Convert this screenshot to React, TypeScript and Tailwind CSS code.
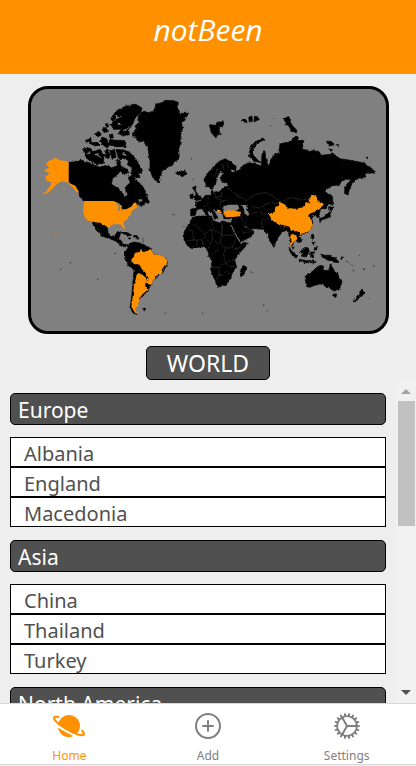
import { IoAddCircleOutline, IoCogOutline, IoPlanet } from "react-icons/io5";

const regions = [
  { name: "Europe", countries: ["Albania", "England", "Macedonia"] },
  { name: "Asia", countries: ["China", "Thailand", "Turkey"] },
  { name: "North America", countries: [] },
];

function WorldMap() {
  return (
    <svg
      viewBox="33 27 1065 726"
      className="block w-full"
      role="img"
      aria-label="World map"
    >
      <defs>
        <filter id="coast" x="0" y="0" width="100%" height="100%">
          <feTurbulence type="fractalNoise" baseFrequency="0.08" numOctaves="2" seed="4" />
          <feDisplacementMap in="SourceGraphic" scale="9" xChannelSelector="R" yChannelSelector="G" />
        </filter>
      </defs>

      <g fill="#000" stroke="#000" strokeWidth="2" strokeLinejoin="round" filter="url(#coast)">
        {/* Greenland and Iceland */}
        <path d="M338 158L350 148L345 138L358 126L354 110L372 92L388 98L405 88L408 72L428 68L436 60L462 62L475 70L472 84L482 100L504 100L494 122L484 126L488 146L482 166L484 188L476 206L478 236L462 246L458 256L440 262L426 274L418 308L410 306L398 292L390 270L390 244L384 206L374 186L352 182L348 172L338 170Z" />
        <path d="M470 274L480 278L494 270L500 280L488 290L476 286Z" />
        {/* Canadian Arctic */}
        <path d="M272 118L284 96L310 80L346 72L366 84L362 100L346 112L338 132L326 148L328 164L308 168L296 160L306 148L282 148L272 134L280 124Z" />
        <path d="M268 178L282 180L318 182L316 200L284 200L268 194Z" />
        <path d="M196 184L212 170L214 188L232 186L240 196L226 198L208 190Z" />
        <path d="M190 206L208 204L224 214L240 208L252 224L250 250L230 252L212 244L196 232Z" />
        <path d="M224 162L236 154L244 162L234 170Z M242 184L248 172L260 176L262 186L270 192L262 204L248 194Z M246 148L256 142L266 154L254 160Z M256 132L262 130L266 140L260 142Z M268 164L278 162L280 174L270 174Z" />
        <path d="M254 214L262 208L272 222L266 236L256 232Z M272 212L284 208L288 232L276 238Z" />
        <path d="M288 208L310 210L328 216L340 230L352 242L360 262L366 276L358 282L360 296L344 290L332 276L338 264L322 254L326 242L308 234L296 238Z" />
        <path d="M300 272L312 262L326 276L314 284Z" />
        {/* Canada */}
        <path d="M146 247L160 246L184 240L206 248L224 256L240 262L258 256L276 264L292 256L288 240L300 242L308 262L296 280L278 296L274 312L292 324L304 334L312 352L320 344L316 322L330 308L324 288L338 284L352 304L366 316L376 334L384 346L366 356L350 358L356 368L372 362L374 374L358 376L345 370L332 382L316 390L300 388L292 368L280 363L190 363L180 346L166 318L146 308Z" />
        <path d="M366 358L374 346L388 364L386 370L370 366Z" />
        {/* Mexico, Central America and Caribbean */}
        <path d="M214 424L232 428L246 428L262 442L264 458L272 468L284 468L290 458L302 458L298 472L292 478L302 480L308 492L322 494L328 500L312 500L298 492L286 482L268 476L246 468L238 456L228 438L236 458L228 450Z" />
        <path d="M300 456L314 456L334 464L332 468L312 462Z M338 468L350 466L358 474L342 474Z M324 474L332 474L330 478Z" />
        {/* South America */}
        <path d="M324 492L342 486L364 490L394 506L394 516L440 538L442 548L430 576L402 596L390 620L378 638L360 654L350 678L344 690L354 704L340 700L330 684L334 656L338 618L342 570L326 558L312 532L316 514L324 508Z" />
        <path d="M368 686L376 684L376 690Z" />
        {/* Europe, Russia and Asia */}
        <path d="M552 298L566 276L582 258L598 244L616 236L632 246L648 260L648 270L630 268L636 278L660 270L664 258L688 248L706 252L724 258L726 222L734 212L738 236L746 262L756 228L776 218L780 192L806 186L828 168L838 180L852 182L846 208L874 212L896 214L904 226L938 222L960 236L986 240L1018 246L1034 250L1054 264L1066 276L1050 280L1034 280L1038 290L1018 294L1000 304L990 320L984 346L974 342L974 320L994 298L976 298L956 314L932 318L914 334L922 340L930 346L928 368L916 386L904 386L896 396L900 408L894 416L886 404L874 406L878 428L872 446L858 460L836 464L844 478L840 488L830 484L826 476L820 486L818 496L824 506L820 508L812 490L810 470L800 450L784 458L768 482L764 498L756 496L742 464L728 448L704 446L686 446L668 432L680 446L696 448L702 456L696 468L662 486L652 472L636 446L632 430L638 416L612 416L608 400L592 386L586 400L594 414L584 418L576 396L562 392L566 410L560 408L546 386L532 388L526 406L512 408L512 388L530 384L526 368L544 362L556 346L572 346L574 332L584 336L600 334L610 322L622 318L624 310L604 306L602 294L610 276L600 272L592 290L586 314L576 330L566 320L556 320Z" />
        {/* Africa and Madagascar */}
        <path d="M518 412L540 408L574 408L580 422L602 430L610 424L634 430L640 448L652 478L662 490L682 486L676 500L656 522L644 540L650 562L636 582L630 600L616 616L592 622L584 598L572 568L576 544L564 522L562 506L544 500L516 506L502 496L492 480L492 458L506 432Z" />
        <path d="M674 556L678 560L672 584L662 590L660 578L664 566Z" />
        {/* British Isles */}
        <path d="M518 322L528 318L526 332L538 348L546 358L528 362L522 350L528 340Z M510 344L520 342L518 354L510 352Z" />
        {/* Svalbard, Franz Josef Land, Novaya Zemlya and Siberian islands */}
        <path d="M568 134L586 136L592 126L612 126L608 138L594 142L604 164L594 160L588 174L574 158Z" />
        <path d="M664 122L676 118L682 124L670 128Z M686 112L696 108L698 124L688 126Z M704 108L712 112L718 118L702 126Z" />
        <path d="M726 174L732 180L714 188L700 204L700 226L716 242L724 248L704 244L688 230L688 216L696 196L708 182Z" />
        <path d="M792 114L806 110L812 130L820 140L830 150L830 158L814 154L806 136L796 134Z" />
        <path d="M918 184L934 184L942 194L928 198Z M948 190L958 194L956 200Z M928 206L938 210L932 214Z M1036 232L1048 232L1044 236Z" />
        {/* Japan and Sakhalin */}
        <path d="M930 342L938 350L938 376L930 370Z M926 380L942 382L934 392L926 390Z M932 394L932 410L918 416L904 420L900 428L898 416L914 410L924 400Z" />
        {/* South-east Asia */}
        <path d="M804 502L816 514L834 530L830 534L814 522Z M838 538L862 542L888 544L886 548L858 548L836 542Z M842 514L854 506L864 502L868 514L860 528L848 526Z M872 516L884 516L876 522L882 532L872 532Z M876 484L884 486L884 496L876 492Z M884 504L892 502L890 510L882 510Z M874 464L880 462L882 474L876 478Z M756 498L764 496L762 502Z" />
        <path d="M902 522L914 526L932 526L950 538L958 548L940 546L928 542L918 538L908 530Z M962 532L972 530L964 540Z" />
        {/* Australia and New Zealand */}
        <path d="M856 586L878 574L892 560L904 556L912 560L908 568L926 572L932 550L940 566L944 574L954 584L966 604L962 620L954 632L936 632L926 620L916 620L908 610L884 616L870 622L860 620L856 600Z M940 642L950 642L948 652L942 650Z" />
        <path d="M1022 628L1030 634L1034 638L1024 650L1018 648L1020 636Z M1014 646L1020 652L1008 664L1000 666L1002 658Z" />
      </g>

      <g fill="#808080" filter="url(#coast)">
        {/* Inland seas and Arctic channels */}
        <path d="M610 378L626 374L654 374L658 386L648 392L610 394Z" />
        <path d="M666 376L678 374L684 382L678 388L688 402L684 408L674 402L672 388Z" />
        <path d="M284 104L296 112L290 116Z M292 128L304 130L296 136Z M196 222L210 216L212 222Z M222 222L238 220L232 228Z M312 218L318 228L306 224Z" />
        <path d="M578 388L586 390L600 406L596 408Z M542 396L550 396L550 400L542 400Z" />
      </g>

      <g fill="none" stroke="#808080" strokeWidth="3" filter="url(#coast)">
        <path d="M634 436L644 458L660 484M284 118L304 108M308 154L328 140M226 224L246 232" />
      </g>

      <g fill="#ff9100">
        {/* Alaska, contiguous United States and Hawaii */}
        <path d="M146 247L134 242L120 241L112 236L102 234L96 240L86 242L78 254L88 262L74 270L74 274L88 278L84 286L76 288L80 302L94 306L92 316L80 332L66 344L84 338L100 324L108 314L124 304L146 308L162 316L172 328L178 338L170 336L158 322L146 312Z" />
        <path d="M191 363L280 363L296 370L306 378L304 388L318 388L334 380L342 368L348 368L352 382L342 388L334 394L332 404L326 408L322 418L310 426L312 438L316 446L310 446L304 434L290 432L276 434L268 442L264 444L256 434L248 436L242 428L228 427L204 422L194 412L190 396Z" />
        <path d="M101 461L106 463L103 466Z" />
      </g>

      <g fill="#ff9100" filter="url(#coast)">
        {/* Brazil */}
        <path d="M346 518L358 516L364 508L372 516L392 508L400 520L430 530L442 540L440 552L430 566L426 580L404 590L398 606L388 618L378 608L386 596L378 580L366 568L358 554L342 552L332 540L342 530Z" />
        {/* Argentina */}
        <path d="M350 584L364 582L382 596L378 612L382 630L366 644L358 656L354 676L346 688L356 702L346 700L334 680L338 650L342 618Z" />
        {/* Turkey */}
        <path d="M610 394L630 389L648 392L662 396L664 408L640 411L618 412L611 404Z M592 390L602 390L600 398L594 396Z" />
        {/* China */}
        <path d="M746 402L764 396L766 380L776 378L780 364L792 374L804 384L826 386L850 382L858 370L872 366L864 360L876 346L888 346L892 360L912 372L900 386L886 396L870 400L864 408L874 418L878 434L870 450L856 458L842 462L830 454L814 454L808 440L792 436L770 432L756 420Z" />
        {/* Thailand */}
        <path d="M811 464L820 462L832 472L830 480L820 484L816 490L820 502L812 492L814 478L810 472Z" />
      </g>

      {/* Uruguay and the Great Lakes */}
      <path d="M376 608L390 614L386 622L376 620Z" fill="#000" />
      <path d="M284 370L298 372L302 378L298 392L293 392L296 378ZM302 380L308 390L304 392Z" fill="#808080" />

      {/* Borders between unvisited countries */}
      <g fill="none" stroke="#303030" strokeWidth="2" filter="url(#coast)">
        <path d="M520 430L556 462L574 448M504 450L520 452L520 480L496 484M556 462L548 480L520 480M574 448L606 462L606 430M574 410L576 430L584 448M606 430L606 466L644 466M606 462L600 486L616 504L636 504L646 478M574 448L578 478L564 506M584 484L600 494M636 504L654 506L668 494M600 506L572 524M616 504L610 526L616 548L632 538L644 540M574 562L598 562L610 550M598 562L598 588L588 602M598 588L616 576L632 582M616 548L630 560L646 560M532 480L530 500M548 480L548 502M556 470L566 486" />
        <path d="M608 250L612 270M620 246L628 266M594 264L584 290M618 322L630 326L648 346L666 354L680 362M604 334L604 350L586 352M564 350L566 370L552 380M584 336L586 352L606 362L624 360M604 362L598 378L612 388M680 362L708 342L738 338L758 348L776 360M694 378L720 384L738 372L774 366M792 362L816 352L838 360L860 358M694 400L720 396L738 406M728 446L724 424L744 414M662 404L668 422L680 434M646 412L644 430M774 434L788 444L804 442M666 456L680 460L696 450" />
      </g>

      {/* Small islands */}
      <path d="M283 520h4M150 548h3M121 568h3M232 598h3M690 576h4M697 578h2M729 676h4M742 694h2M546 700h3M434 700h3M1030 568h4M1062 558h2M1048 656h2M1018 526h2M513 236h3M517 298h3M750 138h3M759 116h2" stroke="#222" strokeWidth="3" />
      <path d="M964 530l8 4M976 542l12 6M992 552l8 6M998 568l4 8M1030 570l4-6M1058 557l4 2M860 542l30 4M368 472l2 18M456 402l10 4M488 438l6 2" fill="none" stroke="#333" strokeWidth="2" />
    </svg>
  );
}

function Scrollbar() {
  return (
    <div className="flex w-5 shrink-0 flex-col items-center bg-[#f1f1f1] py-2" aria-hidden="true">
      <svg viewBox="0 0 10 5" className="mt-px h-[5px] w-[10px] fill-[#a3a3a3]">
        <path d="M5 0L10 5H0Z" />
      </svg>
      <div className="mt-[7px] h-[125px] w-[17px] bg-[#c1c1c1]" />
      <svg viewBox="0 0 10 5" className="mt-auto h-[5px] w-[10px] fill-[#505050]">
        <path d="M0 0H10L5 5Z" />
      </svg>
    </div>
  );
}

const tabs = [
  { label: "Home", Icon: IoPlanet, color: "text-[#ff9100]" },
  { label: "Add", Icon: IoAddCircleOutline, color: "text-[#808080]" },
  { label: "Settings", Icon: IoCogOutline, color: "text-[#808080]" },
];

export default function App() {
  return (
    <div className="flex h-screen flex-col bg-[#eeeeee] font-['Noto_Sans',sans-serif]">
      <header className="flex h-[74px] shrink-0 justify-center bg-[#ff9100] pt-3">
        <h1 className="font-['Open_Sans',sans-serif] text-[30px] leading-9 text-white italic">notBeen</h1>
      </header>

      <div className="mt-3 mr-[27px] ml-7 shrink-0 overflow-hidden rounded-[20px] border-3 border-black bg-[#808080]">
        <WorldMap />
      </div>

      <button
        type="button"
        className="mt-3 h-[34px] shrink-0 self-center rounded-[5px] border border-black bg-[#505050] px-5 text-[23px] leading-8 text-white"
      >
        WORLD
      </button>

      <div className="flex min-h-0 flex-1">
        <main className="min-w-0 flex-1 overflow-hidden px-[10px]">
          {regions.map((region) => (
            <section key={region.name}>
              <h2 className="mt-[13px] mb-3 h-8 rounded-[5px] border border-black bg-[#505050] px-[7px] text-[21px] leading-8 text-white">
                {region.name}
              </h2>
              <ul>
                {region.countries.map((country) => (
                  <li
                    key={country}
                    className="h-[30px] border border-black bg-white px-[13px] text-[20px] leading-8 text-[#505050]"
                  >
                    {country}
                  </li>
                ))}
              </ul>
            </section>
          ))}
        </main>
        <Scrollbar />
      </div>

      <nav className="mb-px flex h-[62px] shrink-0 border-y border-[#d8d8d8] bg-white">
        {tabs.map(({ label, Icon, color }) => (
          <button
            key={label}
            type="button"
            className={`flex flex-1 basis-0 flex-col items-center pt-[6px] text-xs leading-4 ${color}`}
          >
            <Icon size={32} />
            <span className="mt-[6px]">{label}</span>
          </button>
        ))}
      </nav>
    </div>
  );
}
